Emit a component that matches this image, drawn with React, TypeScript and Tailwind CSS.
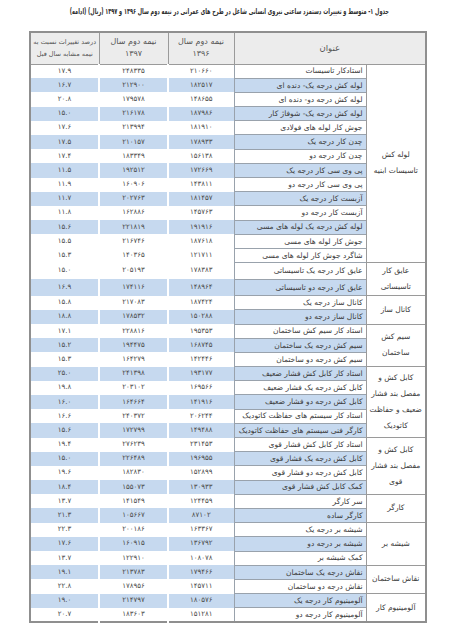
import React from "react"

type Row = [string, string, string, string, boolean]

interface Group {
  label: string[]
  rows: Row[]
}

// title | 1396 | 1397 | percent | blue fill
const groups: Group[] = [
  {
    label: ["لوله کش", "تاسیسات ابنیه"],
    rows: [
      ["استادکار تاسیسات", "210660", "248335", "17.9", false],
      ["لوله کش درجه یک- دنده ای", "182517", "212900", "16.7", true],
      ["لوله کش درجه دو- دنده ای", "148655", "179578", "20.8", false],
      ["لوله کش درجه یک- شوفاژ کار", "187986", "216178", "15.0", true],
      ["جوش کار لوله های فولادی", "181910", "213994", "17.6", false],
      ["چدن کار درجه یک", "178933", "210157", "17.5", true],
      ["چدن کار درجه دو", "156138", "183349", "17.4", false],
      ["پی وی سی کار درجه یک", "172669", "192512", "11.5", true],
      ["پی وی سی کار درجه دو", "143811", "160906", "11.9", false],
      ["آزبست کار درجه یک", "181457", "202763", "11.7", true],
      ["آزبست کار درجه دو", "145763", "162886", "11.8", false],
      ["لوله کش درجه یک لوله های مسی", "191916", "221819", "15.6", true],
      ["جوش کار لوله های مسی", "187618", "216746", "15.5", false],
      ["شاگرد جوش کار لوله های مسی", "121711", "140365", "15.3", false],
    ],
  },
  {
    label: ["عایق کار", "تاسیساتی"],
    rows: [
      ["عایق کار درجه یک تاسیساتی", "178383", "205193", "15.0", false],
      ["عایق کار درجه دو تاسیساتی", "148964", "174116", "16.9", true],
    ],
  },
  {
    label: ["کانال ساز"],
    rows: [
      ["کانال ساز درجه یک", "187424", "217083", "15.8", false],
      ["کانال ساز درجه دو", "150288", "178532", "18.8", true],
    ],
  },
  {
    label: ["سیم کش", "ساختمان"],
    rows: [
      ["استاد کار سیم کش ساختمان", "195353", "228816", "17.1", false],
      ["سیم کش درجه یک ساختمان", "168745", "194475", "15.2", true],
      ["سیم کش درجه دو ساختمان", "142446", "164279", "15.3", false],
    ],
  },
  {
    label: ["کابل کش و", "مفصل بند فشار", "ضعیف و حفاظت", "کاتودیک"],
    rows: [
      ["استاد کار کابل کش فشار ضعیف", "193177", "241398", "25.0", true],
      ["کابل کش درجه یک فشار ضعیف", "169566", "203102", "19.8", false],
      ["کابل کش درجه دو فشار ضعیف", "141916", "164664", "16.0", true],
      ["استاد کار سیستم های حفاظت کاتودیک", "206244", "240372", "16.6", false],
      ["کارگر فنی سیستم های حفاظت کاتودیک", "149488", "172799", "15.6", true],
    ],
  },
  {
    label: ["کابل کش و", "مفصل بند فشار", "قوی"],
    rows: [
      ["استاد کار کابل کش فشار قوی", "231453", "276239", "19.4", false],
      ["کابل کش درجه یک فشار قوی", "196955", "226489", "15.0", true],
      ["کابل کش درجه دو فشار قوی", "152899", "182830", "19.6", false],
      ["کمک کابل کش فشار قوی", "130933", "155073", "18.4", true],
    ],
  },
  {
    label: ["کارگر"],
    rows: [
      ["سر کارگر", "124459", "141549", "13.7", false],
      ["کارگر ساده", "87102", "105667", "21.3", true],
    ],
  },
  {
    label: ["شیشه بر"],
    rows: [
      ["شیشه بر درجه یک", "163367", "200186", "22.3", false],
      ["شیشه بر درجه دو", "136792", "160915", "17.6", true],
      ["کمک شیشه بر", "108078", "122910", "13.7", false],
    ],
  },
  {
    label: ["نقاش ساختمان"],
    rows: [
      ["نقاش درجه یک ساختمان", "179466", "213783", "19.1", true],
      ["نقاش درجه دو ساختمان", "145711", "178956", "22.8", false],
    ],
  },
  {
    label: ["آلومینیوم کار"],
    rows: [
      ["آلومینیوم کار درجه یک", "180576", "214797", "19.0", true],
      ["آلومینیوم کار درجه دو", "151281", "183603", "20.7", false],
    ],
  },
]

const fa = (s: string) => s.replace(/\d/g, (d) => "۰۱۲۳۴۵۶۷۸۹"[Number(d)])

export default function App() {
  return (
    <div className="min-h-[640px] w-[459px] overflow-hidden bg-white pt-[5px] font-['DejaVu_Sans',sans-serif] text-[#3b3b3b]">
      {/* DejaVu is much wider than the scan's font, so the caption is squeezed horizontally */}
      <div className="mb-[12px] flex h-[14px] justify-center">
        <p
          dir="rtl"
          className="shrink-0 scale-x-[0.62] whitespace-nowrap text-[8px] font-bold leading-[14px] text-[#2e2e2e]"
        >
          جدول ۱- متوسط و تغییرات دستمزد ساعتی نیروی انسانی شاغل در طرح های عمرانی در نیمه دوم سال ۱۳۹۶ و ۱۳۹۷ (ریال) (ادامه)
        </p>
      </div>

      <div className="ml-[29px] w-[396px]">
        <table dir="rtl" className="w-full table-fixed border-collapse border-2 border-[#8f8f8f]">
          <colgroup>
            <col className="w-[60px]" />
            <col className="w-[132px]" />
            <col className="w-[66px]" />
            <col className="w-[69px]" />
            <col className="w-[69px]" />
          </colgroup>
          <thead>
            <tr className="h-[32px] bg-[#ececec] text-[#555]">
              <th colSpan={2} className="border border-[#9a9a9a] p-0 text-[8.5px] font-normal">
                عنوان
              </th>
              <th className="border border-[#9a9a9a] p-0 text-[8px] font-normal leading-[12px]">
                <div>نیمه دوم سال</div>
                <div>{fa("1396")}</div>
              </th>
              <th className="border border-[#9a9a9a] p-0 text-[8px] font-normal leading-[12px]">
                <div>نیمه دوم سال</div>
                <div>{fa("1397")}</div>
              </th>
              <th className="whitespace-nowrap border border-[#9a9a9a] p-0 text-[6.5px] font-normal leading-[12px]">
                <div>درصد تغییرات نسبت به</div>
                <div>نیمه مشابه سال قبل</div>
              </th>
            </tr>
          </thead>
          <tbody>
            {groups.map((g) =>
              g.rows.map((r, i) => (
                <tr key={r[0]} className="h-[14.2px]">
                  {i === 0 && (
                    <td
                      rowSpan={g.rows.length}
                      className="whitespace-nowrap border border-[#9a9a9a] bg-white p-0 text-center text-[7.5px] leading-[16px]"
                    >
                      {g.label.map((l) => (
                        <div key={l}>{l}</div>
                      ))}
                    </td>
                  )}
                  <td
                    className={`overflow-hidden whitespace-nowrap border border-[#99a2ac] p-0 pr-[3px] text-right text-[7.5px] leading-none ${
                      r[4] ? "bg-[#c6d9ef]" : "bg-white"
                    }`}
                  >
                    {r[0]}
                  </td>
                  <td
                    className={`p-0 text-center text-[7px] leading-none text-[#4a4a4a] ${
                      r[4] ? "bg-[#c6d9ef]" : "bg-white"
                    }`}
                  >
                    {fa(r[1])}
                  </td>
                  <td
                    className={`border-r-2 border-white p-0 text-center text-[7px] leading-none text-[#4a4a4a] ${
                      r[4] ? "bg-[#c6d9ef]" : "bg-white"
                    }`}
                  >
                    {fa(r[2])}
                  </td>
                  <td
                    className={`border-r-2 border-white p-0 text-center text-[7px] leading-none text-[#4a4a4a] ${
                      r[4] ? "bg-[#c6d9ef]" : "bg-white"
                    }`}
                  >
                    {fa(r[3])}
                  </td>
                </tr>
              ))
            )}
          </tbody>
        </table>
      </div>
    </div>
  )
}
